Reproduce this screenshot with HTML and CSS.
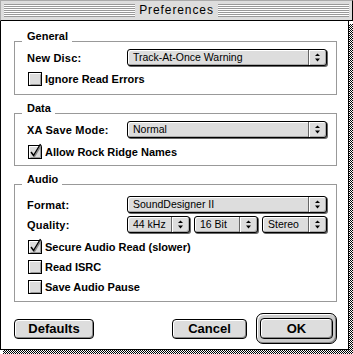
FILE: index.html
```html
<!DOCTYPE html>
<html>
<head>
<meta charset="utf-8">
<title>Preferences</title>
<link rel="stylesheet" href="styles.css">
</head>
<body>
<div class="window">
  <div class="titlebar">
    <span class="stripes"></span><span class="title">Preferences</span><span class="stripes"></span>
  </div>
  <div class="frame">
    <div class="panel">
      <section class="group">
        <div class="group-head"><span class="lead"></span><h2 class="group-title">General</h2><span class="rule"></span></div>
        <div class="group-body body-general">
          <div class="field-row">
            <span class="field-label">New Disc:</span>
            <div class="popup popup-wide"><span class="popup-text">Track-At-Once Warning</span><span class="popup-arrow"><svg viewBox="0 0 5 9" width="5" height="9"><polygon points="0,3 5,3 2.5,0.5" fill="#000"/><polygon points="0,5.5 5,5.5 2.5,8.5" fill="#000"/></svg></span></div>
          </div>
          <div class="check-row">
            <svg class="checkbox" viewBox="0 0 14 14" width="14" height="14"><rect x="0.5" y="0.5" width="13" height="13" fill="#ddd" stroke="#000"/><path d="M1.5 12.5V1.5H12.5" stroke="#fff" fill="none"/><path d="M2.5 12.5H12.5V2.5" stroke="#999" fill="none"/></svg>
            <span>Ignore Read Errors</span>
          </div>
        </div>
      </section>

      <section class="group">
        <div class="group-head"><span class="lead"></span><h2 class="group-title">Data</h2><span class="rule"></span></div>
        <div class="group-body body-data">
          <div class="field-row">
            <span class="field-label">XA Save Mode:</span>
            <div class="popup popup-wide"><span class="popup-text">Normal</span><span class="popup-arrow"><svg viewBox="0 0 5 9" width="5" height="9"><polygon points="0,3 5,3 2.5,0.5" fill="#000"/><polygon points="0,5.5 5,5.5 2.5,8.5" fill="#000"/></svg></span></div>
          </div>
          <div class="check-row">
            <svg class="checkbox" viewBox="0 0 14 14" width="14" height="14"><rect x="0.5" y="0.5" width="13" height="13" fill="#ddd" stroke="#000"/><path d="M1.5 12.5V1.5H12.5" stroke="#fff" fill="none"/><path d="M2.5 12.5H12.5V2.5" stroke="#999" fill="none"/><path d="M4 8 L6.5 11.5 L13.5 0" stroke="#888" stroke-width="1.3" fill="none"/><path d="M3 7 L5.5 10.5 L12.5 -1" stroke="#000" stroke-width="1.4" fill="none"/></svg>
            <span>Allow Rock Ridge Names</span>
          </div>
        </div>
      </section>

      <section class="group">
        <div class="group-head"><span class="lead"></span><h2 class="group-title">Audio</h2><span class="rule"></span></div>
        <div class="group-body body-audio">
          <div class="field-pair">
            <div class="field-row">
              <span class="field-label">Format:</span>
              <div class="popup popup-wide"><span class="popup-text">SoundDesigner II</span><span class="popup-arrow"><svg viewBox="0 0 5 9" width="5" height="9"><polygon points="0,3 5,3 2.5,0.5" fill="#000"/><polygon points="0,5.5 5,5.5 2.5,8.5" fill="#000"/></svg></span></div>
            </div>
            <div class="field-row">
              <span class="field-label">Quality:</span>
              <div class="popup-group">
                <div class="popup popup-rate"><span class="popup-text">44 kHz</span><span class="popup-arrow"><svg viewBox="0 0 5 9" width="5" height="9"><polygon points="0,3 5,3 2.5,0.5" fill="#000"/><polygon points="0,5.5 5,5.5 2.5,8.5" fill="#000"/></svg></span></div>
                <div class="popup popup-bits"><span class="popup-text">16 Bit</span><span class="popup-arrow"><svg viewBox="0 0 5 9" width="5" height="9"><polygon points="0,3 5,3 2.5,0.5" fill="#000"/><polygon points="0,5.5 5,5.5 2.5,8.5" fill="#000"/></svg></span></div>
                <div class="popup popup-chan"><span class="popup-text">Stereo</span><span class="popup-arrow"><svg viewBox="0 0 5 9" width="5" height="9"><polygon points="0,3 5,3 2.5,0.5" fill="#000"/><polygon points="0,5.5 5,5.5 2.5,8.5" fill="#000"/></svg></span></div>
              </div>
            </div>
          </div>
          <div class="check-row">
            <svg class="checkbox" viewBox="0 0 14 14" width="14" height="14"><rect x="0.5" y="0.5" width="13" height="13" fill="#ddd" stroke="#000"/><path d="M1.5 12.5V1.5H12.5" stroke="#fff" fill="none"/><path d="M2.5 12.5H12.5V2.5" stroke="#999" fill="none"/><path d="M4 8 L6.5 11.5 L13.5 0" stroke="#888" stroke-width="1.3" fill="none"/><path d="M3 7 L5.5 10.5 L12.5 -1" stroke="#000" stroke-width="1.4" fill="none"/></svg>
            <span>Secure Audio Read (slower)</span>
          </div>
          <div class="check-row">
            <svg class="checkbox" viewBox="0 0 14 14" width="14" height="14"><rect x="0.5" y="0.5" width="13" height="13" fill="#ddd" stroke="#000"/><path d="M1.5 12.5V1.5H12.5" stroke="#fff" fill="none"/><path d="M2.5 12.5H12.5V2.5" stroke="#999" fill="none"/></svg>
            <span>Read ISRC</span>
          </div>
          <div class="check-row">
            <svg class="checkbox" viewBox="0 0 14 14" width="14" height="14"><rect x="0.5" y="0.5" width="13" height="13" fill="#ddd" stroke="#000"/><path d="M1.5 12.5V1.5H12.5" stroke="#fff" fill="none"/><path d="M2.5 12.5H12.5V2.5" stroke="#999" fill="none"/></svg>
            <span>Save Audio Pause</span>
          </div>
        </div>
      </section>

      <div class="buttons">
        <button type="button" class="btn btn-defaults">Defaults</button>
        <button type="button" class="btn btn-cancel">Cancel</button>
        <div class="default-ring"><button type="button" class="btn btn-ok">OK</button></div>
      </div>
    </div>
    <div class="shadow-v"></div>
  </div>
  <div class="shadow-h"></div>
</div>
</body>
</html>
```

FILE: styles.css
```css
* {
  box-sizing: border-box;
  margin: 0;
  padding: 0;
}

html,
body {
  width: 353px;
  height: 354px;
  overflow: hidden;
  background: #fff;
}

body {
  font-family: "Liberation Sans", Arial, sans-serif;
  color: #000;
}

.window {
  width: 353px;
  height: 354px;
  display: flex;
  flex-direction: column;
}

/* Title bar */
.titlebar {
  flex: none;
  height: 21px;
  display: flex;
  align-items: center;
  padding: 0 3px;
  background: #ddd;
  border: 1px solid #aaa;
  border-bottom: 1px solid #000;
  border-right: 1px solid #000;
}

.stripes {
  flex: 1;
  height: 13px;
  background: repeating-linear-gradient(to bottom, #999 0 1px, #fff 1px 2px);
}

.title {
  padding: 0 4px;
  font-size: 12px;
  line-height: 19px;
  letter-spacing: 0.9px;
  white-space: nowrap;
}

/* Frame and shadow */
.frame {
  flex: 1;
  min-height: 0;
  display: flex;
}

.panel {
  width: 349px;
  flex: none;
  border-left: 1px solid #000;
  border-right: 1px solid #000;
  border-bottom: 1px solid #000;
  padding: 10px 11px 5px 13px;
  display: flex;
  flex-direction: column;
  gap: 8px;
  background: #fff;
}

.shadow-v {
  width: 4px;
  flex: none;
  margin-top: 3px;
  background: repeating-conic-gradient(#000 0 25%, #fff 0 50%) 0 0 / 2px 2px;
}

.shadow-h {
  flex: none;
  height: 4px;
  margin-left: 3px;
  background: repeating-conic-gradient(#000 0 25%, #fff 0 50%) 0 0 / 2px 2px;
}

/* Group boxes */
.group-head {
  display: flex;
  align-items: flex-end;
  height: 11px;
}

.lead {
  width: 8px;
  border-top: 1px solid #999;
}

.rule {
  flex: 1;
  border-top: 1px solid #999;
}

.group-title {
  font-size: 11px;
  font-weight: bold;
  line-height: 11px;
  padding: 0 4px 0 5px;
  white-space: nowrap;
}

.group-body {
  border: 1px solid #999;
  border-top: none;
  padding-left: 12px;
  display: flex;
  flex-direction: column;
}

.body-general {
  padding-top: 7px;
  padding-bottom: 8px;
  gap: 5px;
}

.body-data {
  padding-top: 7px;
  padding-bottom: 6px;
  gap: 6px;
}

.body-audio {
  padding-top: 11px;
  padding-bottom: 7px;
  gap: 6px;
}

.field-pair {
  display: flex;
  flex-direction: column;
  gap: 2px;
}

/* Rows */
.field-row {
  display: flex;
  align-items: center;
  height: 18px;
}

.field-label {
  width: 100px;
  flex: none;
  font-size: 11px;
  font-weight: bold;
  letter-spacing: 0.2px;
  white-space: nowrap;
}

.check-row {
  display: flex;
  align-items: center;
  height: 14px;
  gap: 3px;
  padding-left: 1px;
  font-size: 11px;
  font-weight: bold;
  white-space: nowrap;
}

.checkbox {
  flex: none;
  overflow: visible;
}

/* Popup menus */
.popup {
  align-self: flex-start;
  height: 17px;
  display: flex;
  border: 1px solid #000;
  border-radius: 3px;
  background: #ddd;
  box-shadow: 1px 1px 0 #666, inset 1px 1px 0 #fff, inset -1px -1px 0 #aaa;
}

.popup-wide {
  width: 200px;
}

.popup-group {
  align-self: flex-start;
  display: flex;
  gap: 4px;
}

.popup-rate {
  width: 63px;
}

.popup-bits {
  width: 64px;
}

.popup-chan {
  width: 65px;
}

.popup-text {
  flex: 1;
  padding-left: 5px;
  font-size: 10.5px;
  line-height: 15px;
  white-space: nowrap;
  overflow: hidden;
}

.popup-arrow {
  width: 18px;
  flex: none;
  display: flex;
  align-items: center;
  justify-content: center;
  border-left: 1px solid #666;
  box-shadow: inset 1px 0 0 #fff;
}

/* Buttons */
.buttons {
  display: flex;
  align-items: center;
  height: 31px;
  margin-top: 3px;
}

.btn {
  height: 20px;
  border: 1px solid #000;
  border-radius: 4px;
  background: #ddd;
  box-shadow: inset 1px 1px 0 #fff, inset -1px -1px 0 #888;
  font-family: "Liberation Sans", Arial, sans-serif;
  font-size: 13px;
  font-weight: bold;
  line-height: 18px;
  color: #000;
  text-align: center;
}

.btn-defaults {
  width: 80px;
}

.btn-cancel {
  width: 75px;
  margin-left: auto;
}

.default-ring {
  width: 81px;
  height: 31px;
  margin-left: 9px;
  border: 1px solid #000;
  border-radius: 7px;
  padding: 4px 3px;
  background: #ccc;
  box-shadow: inset 1px 1px 0 #fff, inset -1px -1px 0 #888;
}

.btn-ok {
  width: 73px;
  height: 21px;
  line-height: 19px;
}
```
